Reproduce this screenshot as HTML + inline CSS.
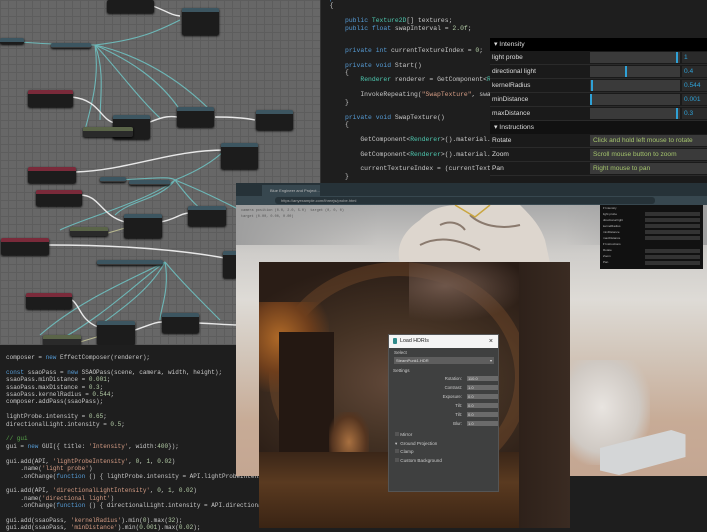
<!DOCTYPE html>
<html><head><meta charset="utf-8"><style>
*{margin:0;padding:0;box-sizing:border-box}
body{width:707px;height:528px;overflow:hidden;position:relative;background:#1e1e1e;font-family:"Liberation Sans",sans-serif}
.abs{position:absolute}
.graph{left:0;top:0;width:320px;height:345px;background-color:#676767;
background-image:linear-gradient(#5d5d5d 1px,transparent 1px),linear-gradient(90deg,#5d5d5d 1px,transparent 1px);background-size:8px 8px}
.node{position:absolute;background:#1c1c1c;border-radius:2px;box-shadow:0 1px 2px #000}
.node.r{border-top:4px solid #7a2a3a}
.node.t{border-top:4px solid #3c5560}
.node.g{border-top:4px solid #5a6448}
.code{font-family:"Liberation Mono",monospace;font-size:6.2px;line-height:9.6px;color:#c8c8c8;white-space:pre}
.k{color:#569cd6}.ty{color:#4ec9b0}.s{color:#d69d85}.c{color:#57a64a}.n{color:#b5cea8}
.gui{background:#1a1a1a;color:#ddd;font-size:6.6px}
.gui .row{height:14px;display:flex;align-items:center;border-bottom:1px solid #2a2a2a}
.gui .lab{width:100px;padding-left:2px}
.gui .bar{width:90px;height:11px;background:#3a3a3a;position:relative;margin-right:2px}
.gui .bar i{position:absolute;top:0;width:2px;height:11px;background:#2fa1d6}
.gui .val{flex:1;height:11px;background:#2a2a2a;color:#2fa1d6;padding-left:2px;line-height:11px}
.gui .hd{height:13px;background:#000;padding-left:4px;line-height:13px;font-size:6.8px}
.gui .txt{flex:1;height:11px;background:#3a3a3a;color:#a4c46c;padding-left:3px;line-height:11px;white-space:nowrap;overflow:hidden}
.dlg{left:388px;top:334px;width:111px;height:158px;background:#3f4040;border:1px solid #555;font-size:4.6px;color:#ccc}
.dlg .in{position:absolute;left:78px;width:31px;height:5px;background:#6b6b6b;color:#ddd;font-size:4px;line-height:5px;padding-left:1px}
.dlg .l{position:absolute;right:36px;font-size:4.3px}
</style></head><body>

<div class="abs graph"></div>
<svg class="abs" style="left:0;top:0" width="320" height="345">
<g fill="none" stroke="#6fc6c6" stroke-width="1.1" opacity=".85">
<path d="M20 42 C60 45 80 45 95 45 C140 40 160 30 180 20"/>
<path d="M95 45 C100 80 90 110 85 130"/>
<path d="M95 45 C105 70 100 100 100 120"/>
<path d="M95 45 C130 60 160 80 180 110"/>
<path d="M95 45 C140 55 180 80 210 110"/>
<path d="M95 45 C110 60 140 100 160 118"/>
<path d="M110 180 C140 180 170 175 175 180 C160 200 130 200 115 215"/>
<path d="M175 180 C150 200 80 220 60 230"/>
<path d="M175 180 C190 200 200 210 210 215"/>
<path d="M175 180 C200 190 220 200 240 210"/>
<path d="M175 180 C200 170 215 160 225 150"/>
<path d="M165 262 C130 280 80 300 40 335"/>
<path d="M165 262 C150 290 120 310 100 325"/>
<path d="M165 262 C170 290 160 310 160 320"/>
<path d="M165 262 C180 280 200 300 220 320"/>
<path d="M165 262 C140 280 100 320 50 345"/>
</g>
<g fill="none" stroke="#e8e8e8" stroke-width="1.4">
<path d="M72 97 C100 100 100 120 115 123 C130 124 140 120 150 122"/>
<path d="M150 122 C165 116 170 116 178 117"/>
<path d="M215 117 C235 117 245 118 255 120"/>
<path d="M75 172 C130 170 170 150 225 150"/>
<path d="M80 195 C100 195 100 215 125 222"/>
<path d="M160 222 C175 220 180 213 190 213"/>
<path d="M48 245 C120 245 180 250 225 258"/>
<path d="M72 300 C80 305 80 320 98 327"/>
<path d="M135 330 C150 325 155 322 162 322"/>
<path d="M198 323 C220 324 230 325 240 325"/>
<path d="M150 5 C165 10 170 15 180 16"/>
</g>
<g fill="none" stroke="#b8b890" stroke-width="1.1"><path d="M105 134 L115 133"/><path d="M108 233 L125 228"/><path d="M80 342 L100 336"/></g>
</svg>
<div class="node" style="left:107px;top:0;width:47px;height:13px"></div>
<div class="node t" style="left:182px;top:8px;width:37px;height:27px"></div>
<div class="node t" style="left:0;top:38px;width:24px;height:6px"></div>
<div class="node t" style="left:51px;top:43px;width:40px;height:5px;background:#3a3a3a"></div>
<div class="node r" style="left:28px;top:90px;width:45px;height:17px"></div>
<div class="node t" style="left:113px;top:115px;width:37px;height:24px"></div>
<div class="node g" style="left:83px;top:127px;width:50px;height:10px;background:#2a2a2a"></div>
<div class="node t" style="left:177px;top:107px;width:37px;height:20px"></div>
<div class="node t" style="left:256px;top:110px;width:37px;height:20px"></div>
<div class="node t" style="left:221px;top:143px;width:37px;height:26px"></div>
<div class="node r" style="left:28px;top:167px;width:48px;height:16px"></div>
<div class="node t" style="left:100px;top:177px;width:26px;height:5px;background:#3a3a3a"></div>
<div class="node t" style="left:129px;top:180px;width:41px;height:5px;background:#3a3a3a"></div>
<div class="node r" style="left:36px;top:190px;width:46px;height:16px"></div>
<div class="node t" style="left:124px;top:214px;width:38px;height:24px"></div>
<div class="node g" style="left:70px;top:227px;width:38px;height:9px;background:#2a2a2a"></div>
<div class="node t" style="left:188px;top:206px;width:38px;height:20px"></div>
<div class="node r" style="left:1px;top:238px;width:48px;height:17px"></div>
<div class="node t" style="left:97px;top:260px;width:66px;height:5px;background:#3a3a3a"></div>
<div class="node t" style="left:223px;top:251px;width:14px;height:27px"></div>
<div class="node r" style="left:26px;top:293px;width:46px;height:16px"></div>
<div class="node t" style="left:97px;top:321px;width:38px;height:24px"></div>
<div class="node t" style="left:162px;top:313px;width:37px;height:20px"></div>
<div class="node g" style="left:43px;top:335px;width:38px;height:10px;background:#2a2a2a"></div>

<div class="abs" style="left:320px;top:0;width:387px;height:185px;background:#1e1e1e;border-left:1px solid #333"></div>
<div class="abs code" style="left:322px;top:-5px;font-size:6.4px;line-height:7.4px">  <span class="k">public class</span> <span class="ty">SwitchTex</span> : <span class="ty">MonoBehaviour</span>
  {

      <span class="k">public</span> <span class="ty">Texture2D</span>[] textures;
      <span class="k">public float</span> swapInterval = <span class="n">2.0f</span>;


      <span class="k">private int</span> currentTextureIndex = <span class="n">0</span>;

      <span class="k">private void</span> Start()
      {
          <span class="ty">Renderer</span> renderer = GetComponent&lt;<span class="ty">Renderer</span>&gt;();

          InvokeRepeating(<span class="s">"SwapTexture"</span>, swapInterval, swapInterval);
      }

      <span class="k">private void</span> SwapTexture()
      {

          GetComponent&lt;<span class="ty">Renderer</span>&gt;().material.SetTexture(<span class="s">"_MainTex"</span>);

          GetComponent&lt;<span class="ty">Renderer</span>&gt;().material.mainTexture = textures;

          currentTextureIndex = (currentTextureIndex + 1);
      }</div>

<div class="abs gui" style="left:490px;top:38px;width:217px;height:146px">
 <div class="hd">▾ Intensity</div>
 <div class="row"><div class="lab">light probe</div><div class="bar"><i style="left:86px"></i></div><div class="val">1</div></div>
 <div class="row"><div class="lab">directional light</div><div class="bar"><i style="left:35px"></i></div><div class="val">0.4</div></div>
 <div class="row"><div class="lab">kernelRadius</div><div class="bar"><i style="left:1px"></i></div><div class="val">0.544</div></div>
 <div class="row"><div class="lab">minDistance</div><div class="bar"><i style="left:0"></i></div><div class="val">0.001</div></div>
 <div class="row"><div class="lab">maxDistance</div><div class="bar"><i style="left:86px"></i></div><div class="val">0.3</div></div>
 <div class="hd" style="background:#111">▾ Instructions</div>
 <div class="row"><div class="lab">Rotate</div><div class="txt">Click and hold left mouse to rotate</div></div>
 <div class="row"><div class="lab">Zoom</div><div class="txt">Scroll mouse button to zoom</div></div>
 <div class="row"><div class="lab">Pan</div><div class="txt">Right mouse to pan</div></div>
</div>

<div class="abs" style="left:0;top:345px;width:707px;height:183px;background:#1e1e1e"></div>
<div class="abs code" style="left:6px;top:354px;font-size:6px;line-height:7.4px">composer = <span class="k">new</span> EffectComposer(renderer);

<span class="k">const</span> ssaoPass = <span class="k">new</span> SSAOPass(scene, camera, width, height);
ssaoPass.minDistance = <span class="n">0.001</span>;
ssaoPass.maxDistance = <span class="n">0.3</span>;
ssaoPass.kernelRadius = <span class="n">0.544</span>;
composer.addPass(ssaoPass);

lightProbe.intensity = <span class="n">0.65</span>;
directionalLight.intensity = <span class="n">0.5</span>;

<span class="c">// gui</span>
gui = <span class="k">new</span> GUI({ title: <span class="s">'Intensity'</span>, width:<span class="n">400</span>});

gui.add(API, <span class="s">'lightProbeIntensity'</span>, <span class="n">0</span>, <span class="n">1</span>, <span class="n">0.02</span>)
    .name(<span class="s">'light probe'</span>)
    .onChange(<span class="k">function</span> () { lightProbe.intensity = API.lightProbeIntensity; render(); });

gui.add(API, <span class="s">'directionalLightIntensity'</span>, <span class="n">0</span>, <span class="n">1</span>, <span class="n">0.02</span>)
    .name(<span class="s">'directional light'</span>)
    .onChange(<span class="k">function</span> () { directionalLight.intensity = API.directionalLightIntensity; });

gui.add(ssaoPass, <span class="s">'kernelRadius'</span>).min(<span class="n">0</span>).max(<span class="n">32</span>);
gui.add(ssaoPass, <span class="s">'minDistance'</span>).min(<span class="n">0.001</span>).max(<span class="n">0.02</span>);</div>

<div class="abs" style="left:236px;top:183px;width:471px;height:13px;background:#263238"></div>
<div class="abs" style="left:262px;top:185px;width:58px;height:11px;background:#37474f;color:#bbb;font-size:4px;line-height:11px;padding-left:8px">Blue Engineer and Project...</div>
<div class="abs" style="left:236px;top:196px;width:471px;height:9px;background:#37474f"></div>
<div class="abs" style="left:275px;top:197px;width:380px;height:7px;background:#263238;border-radius:3px;color:#aaa;font-size:4px;line-height:7px;padding-left:6px">https://anyexample.com/threejs/probe.html</div>
<div class="abs" style="left:236px;top:205px;width:471px;height:271px;background:linear-gradient(180deg,#a9a9a9 0%,#cfcdca 18%,#dedbd6 35%,#d2c6ba 55%,#c7ab96 80%,#c4a692 100%)"></div>
<div class="abs" style="left:236px;top:205px;width:471px;height:40px;background:linear-gradient(90deg,#9e9e9e,transparent 30%,transparent 70%,#a0a0a0)"></div>
<svg class="abs" style="left:380px;top:205px" width="180" height="60">
<path d="M20 58 C15 40 25 25 40 15 C50 5 60 0 80 0 L140 0 C150 10 160 20 165 35 L170 58 Z" fill="#ddd6ce"/>
<path d="M40 40 C60 30 80 35 100 45 M90 10 C100 20 120 25 140 20 M60 20 C70 15 80 18 85 25" stroke="#8a7a6e" stroke-width="2" fill="none"/>
<path d="M75 0 L95 12 L110 0" stroke="#c9a640" stroke-width="1.5" fill="none"/>
</svg>
<div class="abs" style="left:570px;top:360px;width:80px;height:105px;background:radial-gradient(ellipse at 40% 45%,#e8e4e0 0%,#cfc9c3 55%,transparent 75%)"></div>
<div class="abs" style="left:600px;top:430px;width:95px;height:45px;background:#d4d6d7;clip-path:polygon(0 40%,75% 0,90% 10%,90% 60%,20% 100%,0 90%)"></div>
<div class="abs code" style="left:241px;top:208px;font-size:3.5px;line-height:6px;color:#555">camera position (0.0, 2.0, 5.0)  target (0, 0, 0)
target (0.00, 0.00, 0.00)</div>
<div class="abs" style="left:600px;top:205px;width:103px;height:64px;background:#111"></div>
<div class="abs" style="left:645px;top:212px;width:55px;height:30px;background:repeating-linear-gradient(#333 0 4px,#111 4px 6px)"></div>
<div class="abs" style="left:645px;top:249px;width:55px;height:18px;background:repeating-linear-gradient(#333 0 4px,#111 4px 6px)"></div>
<div class="abs" style="left:603px;top:205px;color:#bbb;font-size:3px;line-height:6px">▾ Intensity<br>light probe<br>directional light<br>kernelRadius<br>minDistance<br>maxDistance<br>▾ Instructions<br>Rotate<br>Zoom<br>Pan</div>

<div class="abs" style="left:259px;top:262px;width:311px;height:266px;overflow:hidden;background:#3a2a20">
 <div class="abs" style="left:0;top:0;width:311px;height:266px;background:radial-gradient(ellipse 60% 45% at 45% 45%,#62493a 0%,#443224 50%,#2a1d16 100%)"></div>
 <div class="abs" style="left:10px;top:0;width:260px;height:230px;border-radius:50%;border:14px solid rgba(150,95,50,.3);border-bottom-color:transparent"></div>
 <div class="abs" style="left:0;top:40px;width:70px;height:90px;background:radial-gradient(ellipse at 30% 40%,#b06a28 0%,#6e3e1c 45%,transparent 75%)"></div>
 <div class="abs" style="left:20px;top:70px;width:55px;height:140px;background:#241812"></div>
 <div class="abs" style="left:70px;top:150px;width:40px;height:60px;background:radial-gradient(ellipse,#a87040 0%,#553520 60%,transparent 80%)"></div>
 <div class="abs" style="left:150px;top:0;width:120px;height:60px;background:radial-gradient(ellipse at 30% 40%,#6e564a 0%,transparent 70%)"></div>
 <div class="abs" style="left:0;top:190px;width:311px;height:76px;background:linear-gradient(180deg,#3a2618 0%,#5a3a20 40%,#3a2414 100%)"></div>
 <div class="abs" style="left:260px;top:0;width:51px;height:266px;background:linear-gradient(90deg,#2e211a,#3a2b22)"></div>
</div>

<div class="abs dlg">
 <div style="height:13px;background:#f4f4f4;color:#222;font-size:5.3px;line-height:13px;padding-left:11px;position:relative">Load HDRIs<span style="position:absolute;left:4px;top:3px;width:4px;height:6px;background:#2f8a8a;border-radius:1px"></span><span style="position:absolute;right:5px;top:0;font-size:7px">×</span></div>
 <div style="position:absolute;left:5px;top:15px">Select</div>
 <div style="position:absolute;left:5px;top:22px;width:100px;height:7px;background:#5e5e5e;color:#ddd;font-size:4px;line-height:7px;padding-left:2px">SteamPunk1.HDR<span style="float:right;padding-right:2px">▾</span></div>
 <div style="position:absolute;left:4px;top:33px">Settings</div>
 <div class="l" style="top:41px">Rotation:</div><div class="in" style="top:41px">110.0</div>
 <div class="l" style="top:50px">Contrast:</div><div class="in" style="top:50px">1.0</div>
 <div class="l" style="top:59px">Exposure:</div><div class="in" style="top:59px">0.0</div>
 <div class="l" style="top:68px">Tilt:</div><div class="in" style="top:68px">0.0</div>
 <div class="l" style="top:77px">Tilt:</div><div class="in" style="top:77px">0.0</div>
 <div class="l" style="top:86px">Blur:</div><div class="in" style="top:86px">1.0</div>
 <div style="position:absolute;left:6px;top:96px;line-height:8.6px">
 <span style="display:inline-block;width:4px;height:4px;background:#555"></span> Mirror<br>
 <span style="display:inline-block;width:4px">▾</span> Ground Projection<br>
 <span style="display:inline-block;width:4px;height:4px;background:#555"></span> Clamp<br>
 <span style="display:inline-block;width:4px;height:4px;background:#555"></span> Custom Background</div>
</div>
</body></html>
